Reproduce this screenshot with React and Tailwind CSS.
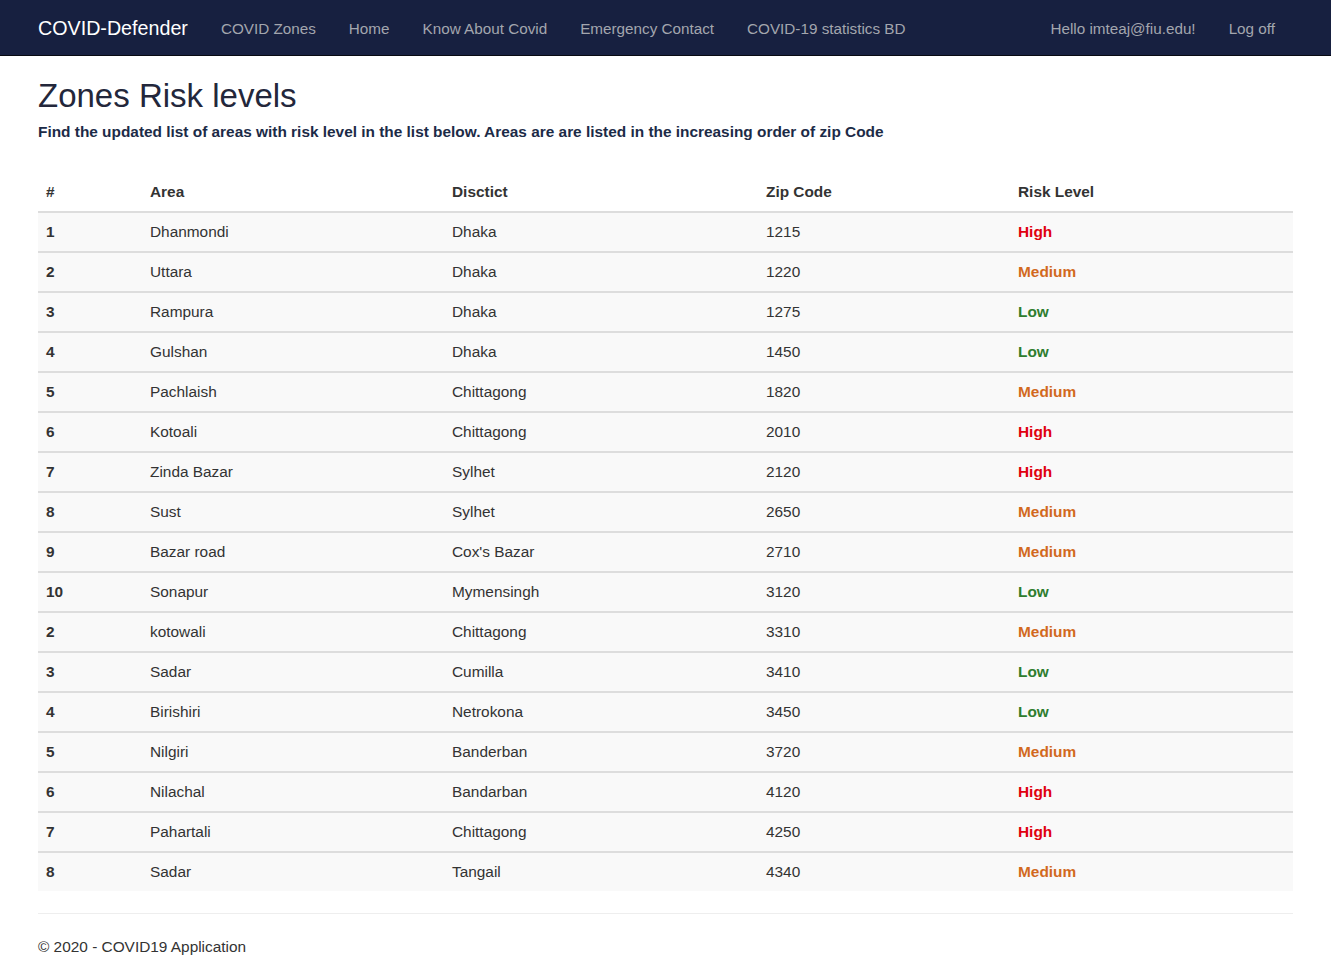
import React from 'react';

const zones = [
    ['1', 'Dhanmondi', 'Dhaka', '1215', 'High'],
    ['2', 'Uttara', 'Dhaka', '1220', 'Medium'],
    ['3', 'Rampura', 'Dhaka', '1275', 'Low'],
    ['4', 'Gulshan', 'Dhaka', '1450', 'Low'],
    ['5', 'Pachlaish', 'Chittagong', '1820', 'Medium'],
    ['6', 'Kotoali', 'Chittagong', '2010', 'High'],
    ['7', 'Zinda Bazar', 'Sylhet', '2120', 'High'],
    ['8', 'Sust', 'Sylhet', '2650', 'Medium'],
    ['9', 'Bazar road', "Cox's Bazar", '2710', 'Medium'],
    ['10', 'Sonapur', 'Mymensingh', '3120', 'Low'],
    ['2', 'kotowali', 'Chittagong', '3310', 'Medium'],
    ['3', 'Sadar', 'Cumilla', '3410', 'Low'],
    ['4', 'Birishiri', 'Netrokona', '3450', 'Low'],
    ['5', 'Nilgiri', 'Banderban', '3720', 'Medium'],
    ['6', 'Nilachal', 'Bandarban', '4120', 'High'],
    ['7', 'Pahartali', 'Chittagong', '4250', 'High'],
    ['8', 'Sadar', 'Tangail', '4340', 'Medium'],
];

const riskColor = {
    High: 'text-[#e0000f]',
    Medium: 'text-[#d2691e]',
    Low: 'text-[#2e7d2e]',
};

const navLinks = ['COVID Zones', 'Home', 'Know About Covid', 'Emergency Contact', 'COVID-19 statistics BD'];

const cols = 'grid grid-cols-[104px_302px_314px_252px_1fr] items-center';

export default function App() {
    return (
        <div className="min-h-screen bg-white font-['Liberation_Sans',Arial,sans-serif] text-[15.4px] text-[#333]">
            {/* Top navbar */}
            <nav className="h-[56px] bg-[#172040] border-b border-[#080a12] flex items-center px-[38px] pt-[3px]">
                <span className="text-[19.7px] text-white">COVID-Defender</span>
                <div className="flex items-center gap-[33px] ml-[33px] text-[15.25px] text-[#a3a6ae]">
                    {navLinks.map(link => (
                        <span key={link}>{link}</span>
                    ))}
                </div>
                <div className="ml-auto flex items-center gap-[33px] pr-[18px] text-[15.25px] text-[#a3a6ae]">
                    <span>Hello imteaj@fiu.edu!</span>
                    <span>Log off</span>
                </div>
            </nav>

            <main className="px-[38px]">
                <h2 className="mt-[22px] text-[33px] leading-[35px] text-[#23273b]">Zones Risk levels</h2>
                <p className="mt-[8px] leading-[21px] font-bold text-[#1c2b47]">
                    Find the updated list of areas with risk level in the list below. Areas are are listed in the increasing order of zip Code
                </p>

                {/* Zones table */}
                <div className="mt-[31px]">
                    <div className={`${cols} h-[38px] font-bold`}>
                        <span className="pl-[8px]">#</span>
                        <span className="pl-[8px]">Area</span>
                        <span className="pl-[8px]">Disctict</span>
                        <span className="pl-[8px]">Zip Code</span>
                        <span className="pl-[8px]">Risk Level</span>
                    </div>
                    {zones.map((z, i) => (
                        <div key={i} className={`${cols} h-[40px] border-t-2 border-[#dddddd] bg-[#f9f9f9]`}>
                            <span className="pl-[8px] font-bold">{z[0]}</span>
                            <span className="pl-[8px]">{z[1]}</span>
                            <span className="pl-[8px]">{z[2]}</span>
                            <span className="pl-[8px]">{z[3]}</span>
                            <span className={`pl-[8px] font-bold ${riskColor[z[4]]}`}>{z[4]}</span>
                        </div>
                    ))}
                </div>

                <hr className="mt-[22px] border-t border-[#eeeeee]" />
                <footer className="mt-[22px] leading-[21px] pb-[10px]">
                    <p>© 2020 - COVID19 Application</p>
                </footer>
            </main>
        </div>
    );
}
